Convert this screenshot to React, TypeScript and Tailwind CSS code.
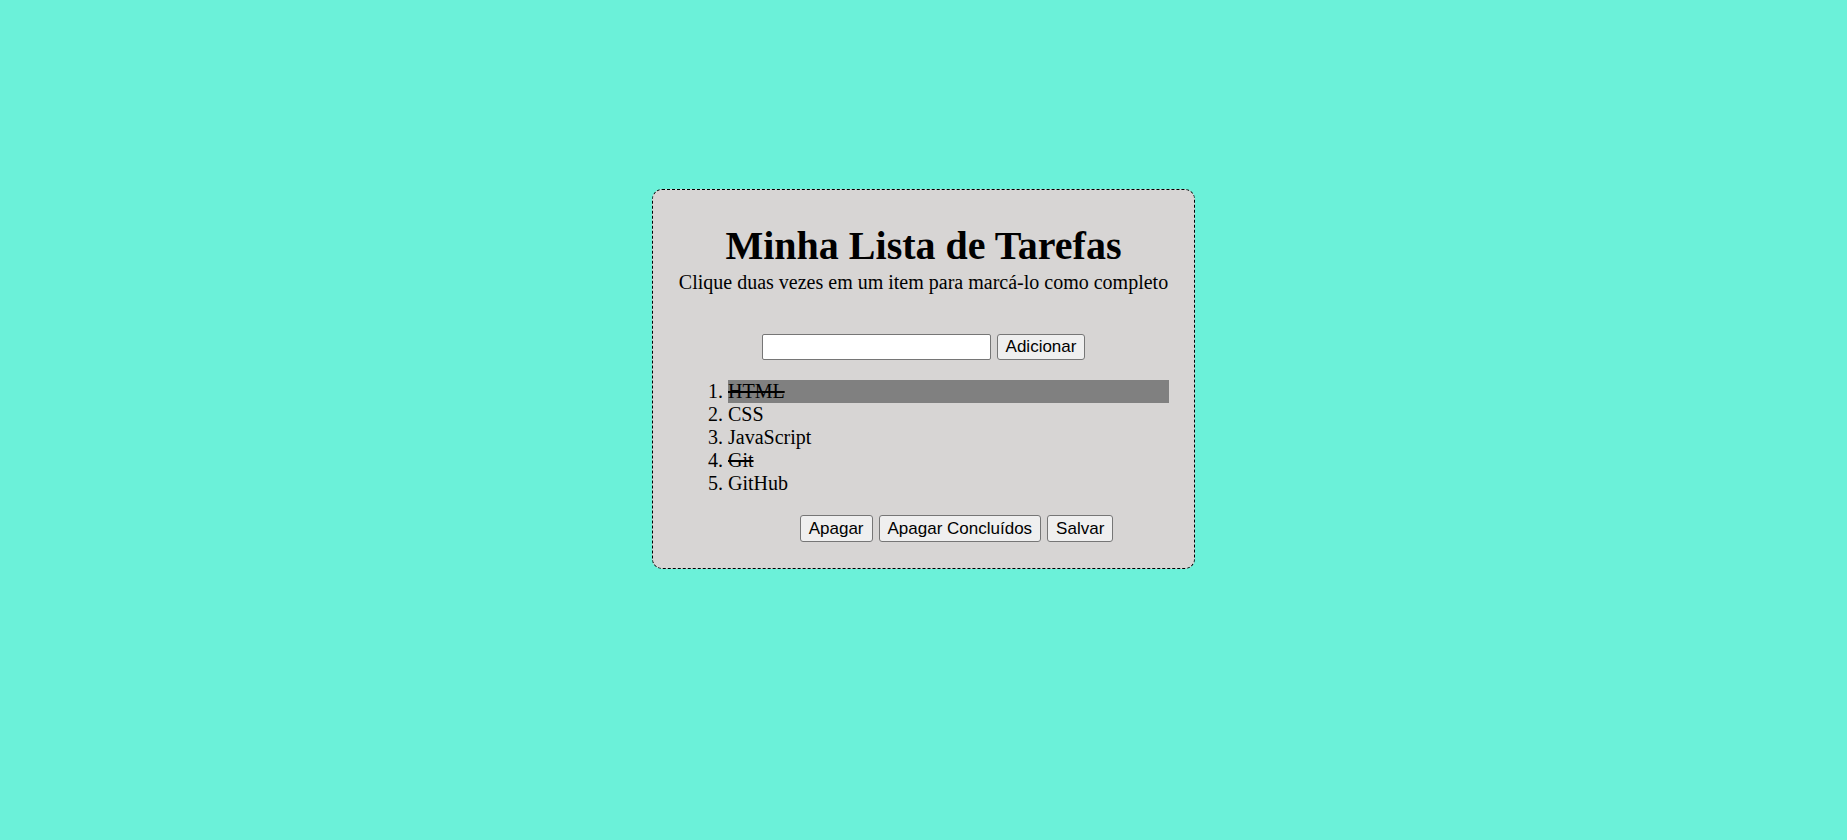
import { useState } from 'react';

interface Task {
  text: string;
  done: boolean;
  selected?: boolean;
}

const initialTasks: Task[] = [
  { text: 'HTML', done: true, selected: true },
  { text: 'CSS', done: false },
  { text: 'JavaScript', done: false },
  { text: 'Git', done: true },
  { text: 'GitHub', done: false },
];

export default function App() {
  const [tasks, setTasks] = useState<Task[]>(initialTasks);
  const [value, setValue] = useState('');

  const addTask = () => {
    if (!value.trim()) return;
    setTasks((t) => [...t, { text: value.trim(), done: false }]);
    setValue('');
  };

  const toggle = (idx: number) => {
    setTasks((t) => t.map((task, i) => (i === idx ? { ...task, done: !task.done } : task)));
  };

  const select = (idx: number) => {
    setTasks((t) => t.map((task, i) => ({ ...task, selected: i === idx })));
  };

  const btn =
    "px-[8px] text-[17px] leading-[20px] font-['Liberation_Sans',Arial,sans-serif] text-black bg-[#efefef] border border-[#767676] rounded-[3px]";

  return (
    <div className="min-h-screen bg-[#6bf1d9] pt-[189px] font-['Liberation_Serif','Times_New_Roman',serif] text-black">
      {/* Card */}
      <div className="mx-auto w-[543px] h-[380px] bg-[#d7d5d4] border border-dashed border-black rounded-[10px] px-[20px] pt-[33px]">
        <h1 className="text-center text-[40px] leading-[46px] font-bold">Minha Lista de Tarefas</h1>
        <p className="mt-[2px] text-center text-[20px] leading-[23px]">
          Clique duas vezes em um item para marcá-lo como completo
        </p>

        {/* Input */}
        <div className="mt-[40px] flex justify-center gap-[6px]">
          <input
            type="text"
            value={value}
            onChange={(e) => setValue(e.target.value)}
            className="w-[229px] h-[26px] bg-white border border-[#767676] rounded-[2px] px-1 text-[16px] outline-none"
          />
          <button className={`${btn} h-[26px]`} onClick={addTask}>
            Adicionar
          </button>
        </div>

        {/* List */}
        <ol className="mt-[20px] ml-[15px] mr-[5px] pl-[40px] list-decimal text-[20px] leading-[23px]">
          {tasks.map((task, idx) => (
            <li
              key={idx}
              onClick={() => select(idx)}
              onDoubleClick={() => toggle(idx)}
              className={`${task.done ? 'line-through' : ''} ${task.selected ? 'bg-[#808080]' : ''}`}
            >
              {task.text}
            </li>
          ))}
        </ol>

        {/* Actions */}
        <div className="mt-[20px] pl-[66px] flex justify-center gap-[6px]">
          <button className={`${btn} h-[27px]`} onClick={() => setTasks([])}>
            Apagar
          </button>
          <button className={`${btn} h-[27px]`} onClick={() => setTasks((t) => t.filter((x) => !x.done))}>
            Apagar Concluídos
          </button>
          <button className={`${btn} h-[27px]`}>Salvar</button>
        </div>
      </div>
    </div>
  );
}
